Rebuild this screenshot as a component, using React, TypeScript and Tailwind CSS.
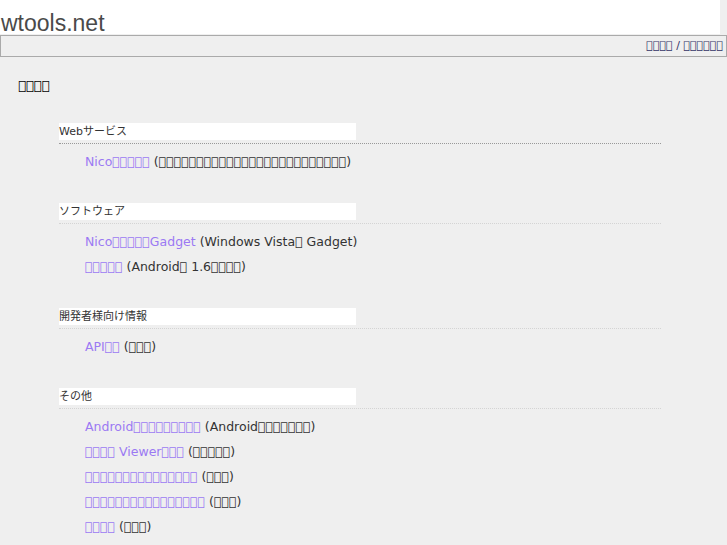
import React from 'react'

// glyphs that no installed font covers, so they draw as empty boxes like the reference
const box = (n: number) => '\uE000'.repeat(n)

type Item = { link: string; note: string }
type Section = { title: string; items: Item[]; dark?: boolean }

const sections: Section[] = [
  {
    title: 'Webサービス',
    dark: true,
    items: [{ link: `Nico${box(5)}`, note: `(${box(25)})` }],
  },
  {
    title: 'ソフトウェア',
    items: [
      { link: `Nico${box(5)}Gadget`, note: `(Windows Vista${box(1)} Gadget)` },
      { link: box(5), note: `(Android${box(1)} 1.6${box(4)})` },
    ],
  },
  {
    title: '開発者様向け情報',
    items: [{ link: `API${box(2)}`, note: `(${box(3)})` }],
  },
  {
    title: 'その他',
    items: [
      { link: `Android${box(9)}`, note: `(Android${box(7)})` },
      { link: `${box(4)} Viewer${box(3)}`, note: `(${box(5)})` },
      { link: box(15), note: `(${box(3)})` },
      { link: box(16), note: `(${box(3)})` },
      { link: box(4), note: `(${box(3)})` },
    ],
  },
]

const App = () => {
  return (
    <div className="min-h-screen bg-[#efefef] font-['DejaVu_Sans','Noto_Sans_CJK_JP',sans-serif] text-[#333]">
      <header className="flex h-[34px] w-[720px] items-end bg-white">
        <h1 className="pl-px font-['Liberation_Sans',sans-serif] text-[23px] leading-[21px] text-[#4a4a4a]">
          wtools.net
        </h1>
      </header>
      <nav className="mt-px h-[22px] border border-[#aaa] bg-[#efefef] pr-[3px] text-right text-[11px] leading-[20px] text-[#336]">
        <a href="#">{box(4)}</a> / <a href="#">{box(6)}</a>
      </nav>
      <main className="pl-[18px] pt-[19px]">
        <h2 className="text-[13px] leading-[20px] text-black">{box(4)}</h2>
        <div className="pl-[41px] pt-[27px]">
          {sections.map((s) => (
            <section key={s.title} className="mb-[29px] w-[602px]">
              <h3
                className={
                  'border-b border-dotted pb-[3px] text-[11px] leading-[17px] ' +
                  (s.dark ? 'border-[#999]' : 'border-[#d4d4d4]')
                }
              >
                <div className="h-[17px] w-[297px] bg-white text-[#333]">{s.title}</div>
              </h3>
              <ul className="pl-[26px] pt-[5px] text-[12.5px] leading-[25px]">
                {s.items.map((it) => (
                  <li key={it.link + it.note}>
                    <a href="#" className="text-[#9b79f3]">
                      {it.link}
                    </a>{' '}
                    {it.note}
                  </li>
                ))}
              </ul>
            </section>
          ))}
        </div>
      </main>
    </div>
  )
}

export default App
